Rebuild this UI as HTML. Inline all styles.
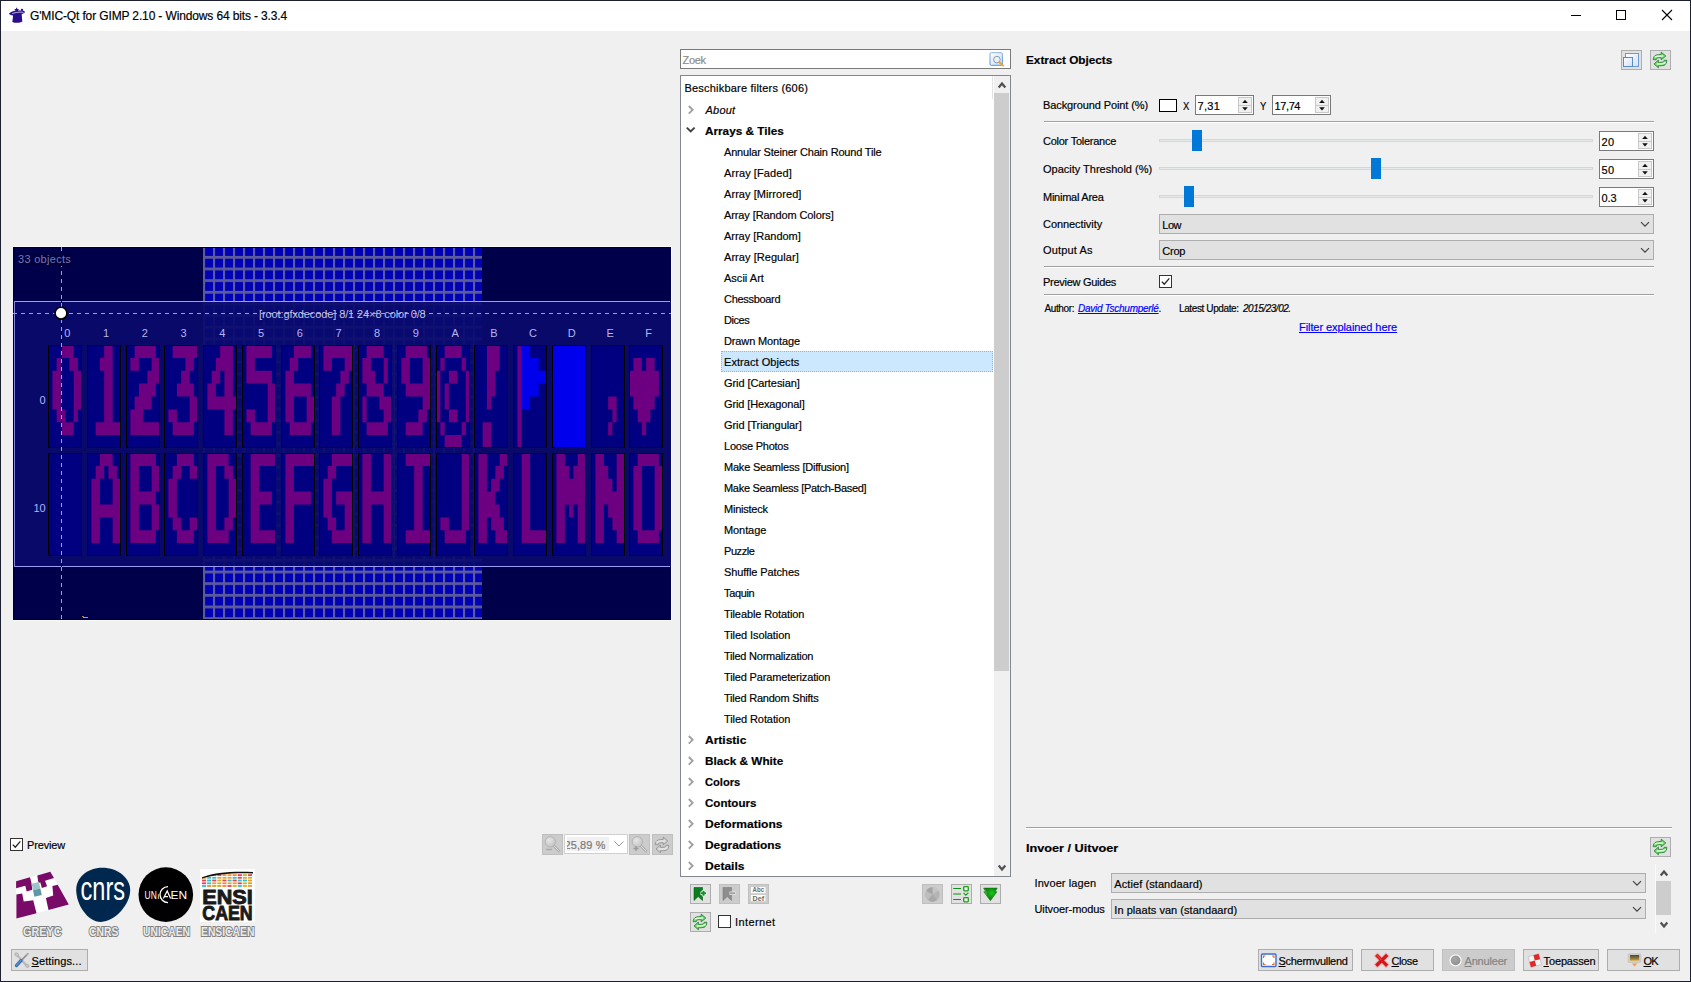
<!DOCTYPE html>
<html><head><meta charset="utf-8"><title>G'MIC-Qt</title><style>
html,body{margin:0;padding:0;background:#f0f0f0;}
body{width:1691px;height:982px;overflow:hidden;position:relative;font-family:"Liberation Sans",sans-serif;font-size:11px;}
.a{position:absolute;display:block;}
.t{white-space:nowrap;-webkit-text-stroke:0.18px currentColor;}
u{text-decoration:underline;text-underline-offset:1px;}
</style></head><body>
<div class="a" style="left:0px;top:0px;width:1691px;height:982px;background:#f0f0f0;"></div>
<div class="a" style="left:1px;top:1px;width:1689px;height:30px;background:#fff;"></div>
<div class="a" style="left:0px;top:0px;width:1691px;height:1px;background:#1d2030;"></div>
<div class="a" style="left:0px;top:981px;width:1691px;height:1px;background:#1d2030;"></div>
<div class="a" style="left:0px;top:0px;width:1px;height:982px;background:#1d2030;"></div>
<div class="a" style="left:1690px;top:0px;width:1px;height:982px;background:#1d2030;"></div>
<svg class="a" style="left:8px;top:6px" width="18" height="18" viewBox="0 0 18 18">
<path d="M5.3 8.2 L13.6 7.2 L14.3 15.4 C12.4 17 6.6 17.2 4.3 15.9 Z" fill="#2a0f8c"/>
<ellipse cx="9" cy="6.9" rx="8" ry="2.3" transform="rotate(-7 9 6.9)" fill="#2a0f8c"/>
<path d="M8.6 1.2 L9.4 2.9 L11.2 3.0 L9.9 4.3 L10.3 6.1 L8.6 5.2 L7.0 6.1 L7.4 4.3 L6.1 3.0 L7.9 2.9 Z" fill="#2a0f8c"/>
<circle cx="14" cy="3.9" r="1.15" fill="#2a0f8c"/>
<path d="M4.2 7.6 C6.5 6.6 10.5 6.0 14.5 6.1" stroke="#fff" stroke-width="0.8" fill="none" opacity="0.85"/>
<path d="M13.8 6.6 C15 6.6 16.3 6.9 16.8 7.4" stroke="#fff" stroke-width="0.6" fill="none" opacity="0.8"/>
</svg>
<span id="t1" class="a t" style="left:30.00px;top:9.00px;font-size:12px;line-height:14px;color:#000;letter-spacing:-0.133px;">G'MIC-Qt for GIMP 2.10 - Windows 64 bits - 3.3.4</span>
<svg class="a" style="left:1560px;top:1px" width="130" height="30" viewBox="1560 1 130 30" shape-rendering="crispEdges">
<rect x="1571" y="15" width="10" height="1" fill="#000"/>
<rect x="1616.5" y="10.5" width="9" height="9" fill="none" stroke="#000" stroke-width="1"/>
</svg>
<svg class="a" style="left:1655px;top:5px" width="24" height="22" viewBox="1655 5 24 22">
<path d="M1662 10 L1672 20 M1672 10 L1662 20" stroke="#000" stroke-width="1.1" fill="none"/>
</svg>
<div class="a" style="left:13px;top:246px;width:659px;height:1px;background:#fbfbfb;"></div>
<div class="a" style="left:671px;top:246px;width:1px;height:375px;background:#fbfbfb;"></div>
<div class="a" style="left:13px;top:620px;width:659px;height:1px;background:#f8f8f8;"></div>
<svg style="position:absolute;left:13px;top:247px" width="658" height="373" viewBox="13 247 658 373">
<defs>
<pattern id="gr" x="203" y="255.9" width="10" height="11.655" patternUnits="userSpaceOnUse"><rect width="10" height="11.655" fill="#0000b4"/><rect x="0" y="0" width="2.1" height="11.655" fill="#5a5a9c"/><rect x="0" y="0" width="10" height="2.8" fill="#5a5a9c"/></pattern>
</defs>
<rect x="13" y="247" width="658" height="373" fill="#00004a"/>
<rect x="203" y="247" width="279" height="373" fill="url(#gr)" shape-rendering="crispEdges"/>
<g shape-rendering="crispEdges"><rect x="14" y="301" width="658" height="266" fill="#0a0a6d" fill-opacity="0.92"/>
<rect x="14" y="301" width="656" height="1" fill="#9c9cf4"/>
<rect x="14" y="566" width="656" height="1" fill="#9c9cf4"/>
<rect x="14" y="301" width="1" height="266" fill="#8484e0"/>
<rect x="13" y="247" width="658" height="1" fill="#000014"/>
<rect x="13" y="247" width="1" height="373" fill="#000014"/>
<rect x="13" y="619" width="658" height="1" fill="#000014"/></g>
<rect x="48" y="345" width="34" height="103" fill="#000080" shape-rendering="crispEdges"/>
<path d="M60.90 345.00H73.65V357.88H60.90ZM56.65 357.88H60.90V370.75H56.65ZM69.40 357.88H77.90V370.75H69.40ZM52.40 370.75H60.90V383.62H52.40ZM73.65 370.75H82.00V383.62H73.65ZM52.40 383.62H60.90V396.50H52.40ZM73.65 383.62H82.00V396.50H73.65ZM52.40 396.50H60.90V409.38H52.40ZM73.65 396.50H82.00V409.38H73.65ZM56.65 409.38H65.15V422.25H56.65ZM73.65 409.38H77.90V422.25H73.65ZM60.90 422.25H73.65V435.12H60.90Z" fill="#6c0080"/>
<rect x="87" y="345" width="34" height="103" fill="#000080" shape-rendering="crispEdges"/>
<path d="M104.15 345.00H112.65V357.88H104.15ZM99.90 357.88H112.65V370.75H99.90ZM104.15 370.75H112.65V383.62H104.15ZM104.15 383.62H112.65V396.50H104.15ZM104.15 396.50H112.65V409.38H104.15ZM104.15 409.38H112.65V422.25H104.15ZM95.65 422.25H121.00V435.12H95.65Z" fill="#6c0080"/>
<rect x="126" y="345" width="34" height="103" fill="#000080" shape-rendering="crispEdges"/>
<path d="M134.65 345.00H155.90V357.88H134.65ZM130.40 357.88H138.90V370.75H130.40ZM151.65 357.88H160.00V370.75H151.65ZM147.40 370.75H160.00V383.62H147.40ZM138.90 383.62H155.90V396.50H138.90ZM134.65 396.50H151.65V409.38H134.65ZM130.40 409.38H143.15V422.25H130.40ZM130.40 422.25H160.00V435.12H130.40Z" fill="#6c0080"/>
<rect x="164" y="345" width="34" height="103" fill="#000080" shape-rendering="crispEdges"/>
<path d="M172.65 345.00H198.00V357.88H172.65ZM185.40 357.88H193.90V370.75H185.40ZM181.15 370.75H189.65V383.62H181.15ZM176.90 383.62H193.90V396.50H176.90ZM189.65 396.50H198.00V409.38H189.65ZM168.40 409.38H176.90V422.25H168.40ZM189.65 409.38H198.00V422.25H189.65ZM172.65 422.25H193.90V435.12H172.65Z" fill="#6c0080"/>
<rect x="203" y="345" width="34" height="103" fill="#000080" shape-rendering="crispEdges"/>
<path d="M220.15 345.00H232.90V357.88H220.15ZM215.90 357.88H232.90V370.75H215.90ZM211.65 370.75H220.15V383.62H211.65ZM224.40 370.75H232.90V383.62H224.40ZM207.40 383.62H215.90V396.50H207.40ZM224.40 383.62H232.90V396.50H224.40ZM207.40 396.50H237.00V409.38H207.40ZM224.40 409.38H232.90V422.25H224.40ZM224.40 422.25H232.90V435.12H224.40Z" fill="#6c0080"/>
<rect x="242" y="345" width="34" height="103" fill="#000080" shape-rendering="crispEdges"/>
<path d="M246.40 345.00H271.90V357.88H246.40ZM246.40 357.88H254.90V370.75H246.40ZM246.40 370.75H271.90V383.62H246.40ZM267.65 383.62H276.00V396.50H267.65ZM267.65 396.50H276.00V409.38H267.65ZM246.40 409.38H254.90V422.25H246.40ZM267.65 409.38H276.00V422.25H267.65ZM250.65 422.25H271.90V435.12H250.65Z" fill="#6c0080"/>
<rect x="281" y="345" width="34" height="103" fill="#000080" shape-rendering="crispEdges"/>
<path d="M293.90 345.00H310.90V357.88H293.90ZM289.65 357.88H298.15V370.75H289.65ZM285.40 370.75H293.90V383.62H285.40ZM285.40 383.62H310.90V396.50H285.40ZM285.40 396.50H293.90V409.38H285.40ZM306.65 396.50H315.00V409.38H306.65ZM285.40 409.38H293.90V422.25H285.40ZM306.65 409.38H315.00V422.25H306.65ZM289.65 422.25H310.90V435.12H289.65Z" fill="#6c0080"/>
<rect x="319" y="345" width="34" height="103" fill="#000080" shape-rendering="crispEdges"/>
<path d="M323.40 345.00H353.00V357.88H323.40ZM323.40 357.88H331.90V370.75H323.40ZM344.65 357.88H353.00V370.75H344.65ZM340.40 370.75H348.90V383.62H340.40ZM336.15 383.62H344.65V396.50H336.15ZM331.90 396.50H340.40V409.38H331.90ZM331.90 409.38H340.40V422.25H331.90ZM331.90 422.25H340.40V435.12H331.90Z" fill="#6c0080"/>
<rect x="358" y="345" width="34" height="103" fill="#000080" shape-rendering="crispEdges"/>
<path d="M366.65 345.00H383.65V357.88H366.65ZM362.40 357.88H370.90V370.75H362.40ZM383.65 357.88H387.90V370.75H383.65ZM362.40 370.75H375.15V383.62H362.40ZM383.65 370.75H387.90V383.62H383.65ZM366.65 383.62H383.65V396.50H366.65ZM362.40 396.50H366.65V409.38H362.40ZM379.40 396.50H392.00V409.38H379.40ZM362.40 409.38H366.65V422.25H362.40ZM383.65 409.38H392.00V422.25H383.65ZM366.65 422.25H387.90V435.12H366.65Z" fill="#6c0080"/>
<rect x="397" y="345" width="34" height="103" fill="#000080" shape-rendering="crispEdges"/>
<path d="M405.65 345.00H426.90V357.88H405.65ZM401.40 357.88H409.90V370.75H401.40ZM422.65 357.88H431.00V370.75H422.65ZM401.40 370.75H409.90V383.62H401.40ZM422.65 370.75H431.00V383.62H422.65ZM405.65 383.62H431.00V396.50H405.65ZM422.65 396.50H431.00V409.38H422.65ZM418.40 409.38H426.90V422.25H418.40ZM405.65 422.25H422.65V435.12H405.65Z" fill="#6c0080"/>
<rect x="436" y="345" width="34" height="103" fill="#000080" shape-rendering="crispEdges"/>
<path d="M444.65 345.00H461.65V357.88H444.65ZM440.40 357.88H444.65V370.75H440.40ZM461.65 357.88H465.90V370.75H461.65ZM436.15 370.75H440.40V383.62H436.15ZM448.90 370.75H457.40V383.62H448.90ZM465.90 370.75H470.00V383.62H465.90ZM436.15 383.62H440.40V396.50H436.15ZM444.65 383.62H448.90V396.50H444.65ZM465.90 383.62H470.00V396.50H465.90ZM436.15 396.50H440.40V409.38H436.15ZM444.65 396.50H448.90V409.38H444.65ZM465.90 396.50H470.00V409.38H465.90ZM436.15 409.38H440.40V422.25H436.15ZM448.90 409.38H457.40V422.25H448.90ZM465.90 409.38H470.00V422.25H465.90ZM440.40 422.25H444.65V435.12H440.40ZM461.65 422.25H465.90V435.12H461.65ZM444.65 435.12H461.65V448.00H444.65Z" fill="#6c0080"/>
<rect x="474" y="345" width="34" height="103" fill="#000080" shape-rendering="crispEdges"/>
<path d="M486.90 345.00H499.65V357.88H486.90ZM486.90 357.88H499.65V370.75H486.90ZM486.90 370.75H495.40V383.62H486.90ZM486.90 383.62H495.40V396.50H486.90ZM486.90 396.50H491.15V409.38H486.90ZM482.65 422.25H491.15V435.12H482.65ZM482.65 435.12H491.15V448.00H482.65Z" fill="#6c0080"/>
<rect x="513" y="345" width="34" height="103" fill="#000080" shape-rendering="crispEdges"/>
<path d="M517.40 345.00H521.65V357.88H517.40ZM517.40 357.88H521.65V370.75H517.40ZM517.40 370.75H521.65V383.62H517.40ZM517.40 383.62H521.65V396.50H517.40ZM517.40 396.50H521.65V409.38H517.40ZM517.40 409.38H521.65V422.25H517.40ZM517.40 422.25H521.65V435.12H517.40ZM517.40 435.12H521.65V448.00H517.40Z" fill="#6c0080"/>
<path d="M521.65 345.00H530.15V357.88H521.65ZM521.65 357.88H538.65V370.75H521.65ZM521.65 370.75H547.00V383.62H521.65ZM521.65 383.62H538.65V396.50H521.65ZM521.65 396.50H530.15V409.38H521.65Z" fill="#0000ec"/>
<rect x="552" y="345" width="34" height="103" fill="#000080" shape-rendering="crispEdges"/>
<path d="M552.15 345.00H586.00V357.88H552.15ZM552.15 357.88H586.00V370.75H552.15ZM552.15 370.75H586.00V383.62H552.15ZM552.15 383.62H586.00V396.50H552.15ZM552.15 396.50H586.00V409.38H552.15ZM552.15 409.38H586.00V422.25H552.15ZM552.15 422.25H586.00V435.12H552.15ZM552.15 435.12H586.00V448.00H552.15Z" fill="#0000ec"/>
<rect x="591" y="345" width="34" height="103" fill="#000080" shape-rendering="crispEdges"/>
<path d="M608.15 396.50H616.65V409.38H608.15ZM612.40 409.38H616.65V422.25H612.40ZM608.15 422.25H612.40V435.12H608.15Z" fill="#6c0080"/>
<rect x="629" y="345" width="34" height="103" fill="#000080" shape-rendering="crispEdges"/>
<path d="M633.40 357.88H641.90V370.75H633.40ZM646.15 357.88H654.65V370.75H646.15ZM629.15 370.75H658.90V383.62H629.15ZM629.15 383.62H658.90V396.50H629.15ZM633.40 396.50H654.65V409.38H633.40ZM637.65 409.38H650.40V422.25H637.65ZM641.90 422.25H646.15V435.12H641.90Z" fill="#6c0080"/>
<rect x="48" y="453" width="34" height="103" fill="#000080" shape-rendering="crispEdges"/>
<rect x="87" y="453" width="34" height="103" fill="#000080" shape-rendering="crispEdges"/>
<path d="M99.90 453.00H112.65V465.88H99.90ZM95.65 465.88H104.15V478.75H95.65ZM108.40 465.88H116.90V478.75H108.40ZM91.40 478.75H99.90V491.62H91.40ZM112.65 478.75H121.00V491.62H112.65ZM91.40 491.62H99.90V504.50H91.40ZM112.65 491.62H121.00V504.50H112.65ZM91.40 504.50H121.00V517.38H91.40ZM91.40 517.38H99.90V530.25H91.40ZM112.65 517.38H121.00V530.25H112.65ZM91.40 530.25H99.90V543.12H91.40ZM112.65 530.25H121.00V543.12H112.65Z" fill="#6c0080"/>
<rect x="126" y="453" width="34" height="103" fill="#000080" shape-rendering="crispEdges"/>
<path d="M130.40 453.00H155.90V465.88H130.40ZM130.40 465.88H138.90V478.75H130.40ZM151.65 465.88H160.00V478.75H151.65ZM130.40 478.75H138.90V491.62H130.40ZM151.65 478.75H160.00V491.62H151.65ZM130.40 491.62H155.90V504.50H130.40ZM130.40 504.50H138.90V517.38H130.40ZM151.65 504.50H160.00V517.38H151.65ZM130.40 517.38H138.90V530.25H130.40ZM151.65 517.38H160.00V530.25H151.65ZM130.40 530.25H155.90V543.12H130.40Z" fill="#6c0080"/>
<rect x="164" y="453" width="34" height="103" fill="#000080" shape-rendering="crispEdges"/>
<path d="M176.90 453.00H193.90V465.88H176.90ZM172.65 465.88H181.15V478.75H172.65ZM189.65 465.88H198.00V478.75H189.65ZM168.40 478.75H176.90V491.62H168.40ZM168.40 491.62H176.90V504.50H168.40ZM168.40 504.50H176.90V517.38H168.40ZM172.65 517.38H181.15V530.25H172.65ZM189.65 517.38H198.00V530.25H189.65ZM176.90 530.25H193.90V543.12H176.90Z" fill="#6c0080"/>
<rect x="203" y="453" width="34" height="103" fill="#000080" shape-rendering="crispEdges"/>
<path d="M207.40 453.00H228.65V465.88H207.40ZM207.40 465.88H215.90V478.75H207.40ZM224.40 465.88H232.90V478.75H224.40ZM207.40 478.75H215.90V491.62H207.40ZM228.65 478.75H237.00V491.62H228.65ZM207.40 491.62H215.90V504.50H207.40ZM228.65 491.62H237.00V504.50H228.65ZM207.40 504.50H215.90V517.38H207.40ZM228.65 504.50H237.00V517.38H228.65ZM207.40 517.38H215.90V530.25H207.40ZM224.40 517.38H232.90V530.25H224.40ZM207.40 530.25H228.65V543.12H207.40Z" fill="#6c0080"/>
<rect x="242" y="453" width="34" height="103" fill="#000080" shape-rendering="crispEdges"/>
<path d="M250.65 453.00H276.00V465.88H250.65ZM250.65 465.88H259.15V478.75H250.65ZM250.65 478.75H259.15V491.62H250.65ZM250.65 491.62H271.90V504.50H250.65ZM250.65 504.50H259.15V517.38H250.65ZM250.65 517.38H259.15V530.25H250.65ZM250.65 530.25H276.00V543.12H250.65Z" fill="#6c0080"/>
<rect x="281" y="453" width="34" height="103" fill="#000080" shape-rendering="crispEdges"/>
<path d="M285.40 453.00H315.00V465.88H285.40ZM285.40 465.88H293.90V478.75H285.40ZM285.40 478.75H293.90V491.62H285.40ZM285.40 491.62H310.90V504.50H285.40ZM285.40 504.50H293.90V517.38H285.40ZM285.40 517.38H293.90V530.25H285.40ZM285.40 530.25H293.90V543.12H285.40Z" fill="#6c0080"/>
<rect x="319" y="453" width="34" height="103" fill="#000080" shape-rendering="crispEdges"/>
<path d="M331.90 453.00H353.00V465.88H331.90ZM327.65 465.88H336.15V478.75H327.65ZM323.40 478.75H331.90V491.62H323.40ZM323.40 491.62H331.90V504.50H323.40ZM336.15 491.62H353.00V504.50H336.15ZM323.40 504.50H331.90V517.38H323.40ZM344.65 504.50H353.00V517.38H344.65ZM327.65 517.38H336.15V530.25H327.65ZM344.65 517.38H353.00V530.25H344.65ZM331.90 530.25H353.00V543.12H331.90Z" fill="#6c0080"/>
<rect x="358" y="453" width="34" height="103" fill="#000080" shape-rendering="crispEdges"/>
<path d="M362.40 453.00H370.90V465.88H362.40ZM383.65 453.00H392.00V465.88H383.65ZM362.40 465.88H370.90V478.75H362.40ZM383.65 465.88H392.00V478.75H383.65ZM362.40 478.75H370.90V491.62H362.40ZM383.65 478.75H392.00V491.62H383.65ZM362.40 491.62H392.00V504.50H362.40ZM362.40 504.50H370.90V517.38H362.40ZM383.65 504.50H392.00V517.38H383.65ZM362.40 517.38H370.90V530.25H362.40ZM383.65 517.38H392.00V530.25H383.65ZM362.40 530.25H370.90V543.12H362.40ZM383.65 530.25H392.00V543.12H383.65Z" fill="#6c0080"/>
<rect x="397" y="453" width="34" height="103" fill="#000080" shape-rendering="crispEdges"/>
<path d="M405.65 453.00H431.00V465.88H405.65ZM414.15 465.88H422.65V478.75H414.15ZM414.15 478.75H422.65V491.62H414.15ZM414.15 491.62H422.65V504.50H414.15ZM414.15 504.50H422.65V517.38H414.15ZM414.15 517.38H422.65V530.25H414.15ZM405.65 530.25H431.00V543.12H405.65Z" fill="#6c0080"/>
<rect x="436" y="453" width="34" height="103" fill="#000080" shape-rendering="crispEdges"/>
<path d="M461.65 453.00H470.00V465.88H461.65ZM461.65 465.88H470.00V478.75H461.65ZM461.65 478.75H470.00V491.62H461.65ZM461.65 491.62H470.00V504.50H461.65ZM461.65 504.50H470.00V517.38H461.65ZM440.40 517.38H448.90V530.25H440.40ZM461.65 517.38H470.00V530.25H461.65ZM444.65 530.25H465.90V543.12H444.65Z" fill="#6c0080"/>
<rect x="474" y="453" width="34" height="103" fill="#000080" shape-rendering="crispEdges"/>
<path d="M478.40 453.00H486.90V465.88H478.40ZM499.65 453.00H508.00V465.88H499.65ZM478.40 465.88H486.90V478.75H478.40ZM495.40 465.88H503.90V478.75H495.40ZM478.40 478.75H486.90V491.62H478.40ZM491.15 478.75H499.65V491.62H491.15ZM478.40 491.62H495.40V504.50H478.40ZM478.40 504.50H499.65V517.38H478.40ZM478.40 517.38H486.90V530.25H478.40ZM491.15 517.38H503.90V530.25H491.15ZM478.40 530.25H486.90V543.12H478.40ZM495.40 530.25H508.00V543.12H495.40Z" fill="#6c0080"/>
<rect x="513" y="453" width="34" height="103" fill="#000080" shape-rendering="crispEdges"/>
<path d="M521.65 453.00H530.15V465.88H521.65ZM521.65 465.88H530.15V478.75H521.65ZM521.65 478.75H530.15V491.62H521.65ZM521.65 491.62H530.15V504.50H521.65ZM521.65 504.50H530.15V517.38H521.65ZM521.65 517.38H530.15V530.25H521.65ZM521.65 530.25H547.00V543.12H521.65Z" fill="#6c0080"/>
<rect x="552" y="453" width="34" height="103" fill="#000080" shape-rendering="crispEdges"/>
<path d="M556.40 453.00H564.90V465.88H556.40ZM577.65 453.00H586.00V465.88H577.65ZM556.40 465.88H569.15V478.75H556.40ZM573.40 465.88H586.00V478.75H573.40ZM556.40 478.75H586.00V491.62H556.40ZM556.40 491.62H586.00V504.50H556.40ZM556.40 504.50H564.90V517.38H556.40ZM569.15 504.50H573.40V517.38H569.15ZM577.65 504.50H586.00V517.38H577.65ZM556.40 517.38H564.90V530.25H556.40ZM577.65 517.38H586.00V530.25H577.65ZM556.40 530.25H564.90V543.12H556.40ZM577.65 530.25H586.00V543.12H577.65Z" fill="#6c0080"/>
<rect x="591" y="453" width="34" height="103" fill="#000080" shape-rendering="crispEdges"/>
<path d="M595.40 453.00H603.90V465.88H595.40ZM616.65 453.00H625.00V465.88H616.65ZM595.40 465.88H608.15V478.75H595.40ZM616.65 465.88H625.00V478.75H616.65ZM595.40 478.75H612.40V491.62H595.40ZM616.65 478.75H625.00V491.62H616.65ZM595.40 491.62H625.00V504.50H595.40ZM595.40 504.50H603.90V517.38H595.40ZM608.15 504.50H625.00V517.38H608.15ZM595.40 517.38H603.90V530.25H595.40ZM612.40 517.38H625.00V530.25H612.40ZM595.40 530.25H603.90V543.12H595.40ZM616.65 530.25H625.00V543.12H616.65Z" fill="#6c0080"/>
<rect x="629" y="453" width="34" height="103" fill="#000080" shape-rendering="crispEdges"/>
<path d="M637.65 453.00H658.90V465.88H637.65ZM633.40 465.88H641.90V478.75H633.40ZM654.65 465.88H663.00V478.75H654.65ZM633.40 478.75H641.90V491.62H633.40ZM654.65 478.75H663.00V491.62H654.65ZM633.40 491.62H641.90V504.50H633.40ZM654.65 491.62H663.00V504.50H654.65ZM633.40 504.50H641.90V517.38H633.40ZM654.65 504.50H663.00V517.38H654.65ZM633.40 517.38H641.90V530.25H633.40ZM654.65 517.38H663.00V530.25H654.65ZM637.65 530.25H658.90V543.12H637.65Z" fill="#6c0080"/>
<path d="M48 345h34v103h-34z M49 346v101h32v-101z" fill="#000" fill-rule="evenodd" shape-rendering="crispEdges"/>
<path d="M87 345h34v103h-34z M88 346v101h32v-101z" fill="#000" fill-rule="evenodd" shape-rendering="crispEdges"/>
<path d="M126 345h34v103h-34z M127 346v101h32v-101z" fill="#000" fill-rule="evenodd" shape-rendering="crispEdges"/>
<path d="M164 345h34v103h-34z M165 346v101h32v-101z" fill="#000" fill-rule="evenodd" shape-rendering="crispEdges"/>
<path d="M203 345h34v103h-34z M204 346v101h32v-101z" fill="#000" fill-rule="evenodd" shape-rendering="crispEdges"/>
<path d="M242 345h34v103h-34z M243 346v101h32v-101z" fill="#000" fill-rule="evenodd" shape-rendering="crispEdges"/>
<path d="M281 345h34v103h-34z M282 346v101h32v-101z" fill="#000" fill-rule="evenodd" shape-rendering="crispEdges"/>
<path d="M319 345h34v103h-34z M320 346v101h32v-101z" fill="#000" fill-rule="evenodd" shape-rendering="crispEdges"/>
<path d="M358 345h34v103h-34z M359 346v101h32v-101z" fill="#000" fill-rule="evenodd" shape-rendering="crispEdges"/>
<path d="M397 345h34v103h-34z M398 346v101h32v-101z" fill="#000" fill-rule="evenodd" shape-rendering="crispEdges"/>
<path d="M436 345h34v103h-34z M437 346v101h32v-101z" fill="#000" fill-rule="evenodd" shape-rendering="crispEdges"/>
<path d="M474 345h34v103h-34z M475 346v101h32v-101z" fill="#000" fill-rule="evenodd" shape-rendering="crispEdges"/>
<path d="M513 345h34v103h-34z M514 346v101h32v-101z" fill="#000" fill-rule="evenodd" shape-rendering="crispEdges"/>
<path d="M552 345h34v103h-34z M553 346v101h32v-101z" fill="#000" fill-rule="evenodd" shape-rendering="crispEdges"/>
<path d="M591 345h34v103h-34z M592 346v101h32v-101z" fill="#000" fill-rule="evenodd" shape-rendering="crispEdges"/>
<path d="M629 345h34v103h-34z M630 346v101h32v-101z" fill="#000" fill-rule="evenodd" shape-rendering="crispEdges"/>
<path d="M48 453h34v103h-34z M49 454v101h32v-101z" fill="#000" fill-rule="evenodd" shape-rendering="crispEdges"/>
<path d="M87 453h34v103h-34z M88 454v101h32v-101z" fill="#000" fill-rule="evenodd" shape-rendering="crispEdges"/>
<path d="M126 453h34v103h-34z M127 454v101h32v-101z" fill="#000" fill-rule="evenodd" shape-rendering="crispEdges"/>
<path d="M164 453h34v103h-34z M165 454v101h32v-101z" fill="#000" fill-rule="evenodd" shape-rendering="crispEdges"/>
<path d="M203 453h34v103h-34z M204 454v101h32v-101z" fill="#000" fill-rule="evenodd" shape-rendering="crispEdges"/>
<path d="M242 453h34v103h-34z M243 454v101h32v-101z" fill="#000" fill-rule="evenodd" shape-rendering="crispEdges"/>
<path d="M281 453h34v103h-34z M282 454v101h32v-101z" fill="#000" fill-rule="evenodd" shape-rendering="crispEdges"/>
<path d="M319 453h34v103h-34z M320 454v101h32v-101z" fill="#000" fill-rule="evenodd" shape-rendering="crispEdges"/>
<path d="M358 453h34v103h-34z M359 454v101h32v-101z" fill="#000" fill-rule="evenodd" shape-rendering="crispEdges"/>
<path d="M397 453h34v103h-34z M398 454v101h32v-101z" fill="#000" fill-rule="evenodd" shape-rendering="crispEdges"/>
<path d="M436 453h34v103h-34z M437 454v101h32v-101z" fill="#000" fill-rule="evenodd" shape-rendering="crispEdges"/>
<path d="M474 453h34v103h-34z M475 454v101h32v-101z" fill="#000" fill-rule="evenodd" shape-rendering="crispEdges"/>
<path d="M513 453h34v103h-34z M514 454v101h32v-101z" fill="#000" fill-rule="evenodd" shape-rendering="crispEdges"/>
<path d="M552 453h34v103h-34z M553 454v101h32v-101z" fill="#000" fill-rule="evenodd" shape-rendering="crispEdges"/>
<path d="M591 453h34v103h-34z M592 454v101h32v-101z" fill="#000" fill-rule="evenodd" shape-rendering="crispEdges"/>
<path d="M629 453h34v103h-34z M630 454v101h32v-101z" fill="#000" fill-rule="evenodd" shape-rendering="crispEdges"/>
<g shape-rendering="crispEdges">
<rect x="13" y="313" width="658" height="1" fill="#00001c"/>
<rect x="61" y="247" width="1" height="373" fill="#00001c"/>
<line x1="13" y1="313.5" x2="671" y2="313.5" stroke="#a2a2b8" stroke-width="1" stroke-dasharray="4 4"/>
<line x1="61.5" y1="247" x2="61.5" y2="620" stroke="#a2a2b8" stroke-width="1" stroke-dasharray="4 4"/>
</g>
<circle cx="61" cy="313.2" r="5.9" fill="#fff" stroke="#000" stroke-width="1.6"/>
</svg>
<span id="t2" class="a t" style="left:18.00px;top:253.00px;font-size:11px;line-height:13px;color:#7676b2;letter-spacing:0.294px;background:#00003e;-webkit-text-stroke:0;">33 objects</span>
<span id="t3" class="a t" style="left:259.00px;top:308.00px;font-size:11px;line-height:13px;color:#c0c0e8;letter-spacing:-0.106px;-webkit-text-stroke:0;">[root:gfxdecode] 8/1 24×8 color 0/8</span>
<span id="t4" class="a t" style="left:64.20px;top:327.00px;font-size:11px;line-height:13px;color:#b4b4f2;-webkit-text-stroke:0;">0</span>
<span id="t5" class="a t" style="left:102.94px;top:327.00px;font-size:11px;line-height:13px;color:#b4b4f2;-webkit-text-stroke:0;">1</span>
<span id="t6" class="a t" style="left:141.68px;top:327.00px;font-size:11px;line-height:13px;color:#b4b4f2;-webkit-text-stroke:0;">2</span>
<span id="t7" class="a t" style="left:180.42px;top:327.00px;font-size:11px;line-height:13px;color:#b4b4f2;-webkit-text-stroke:0;">3</span>
<span id="t8" class="a t" style="left:219.16px;top:327.00px;font-size:11px;line-height:13px;color:#b4b4f2;-webkit-text-stroke:0;">4</span>
<span id="t9" class="a t" style="left:257.90px;top:327.00px;font-size:11px;line-height:13px;color:#b4b4f2;-webkit-text-stroke:0;">5</span>
<span id="t10" class="a t" style="left:296.64px;top:327.00px;font-size:11px;line-height:13px;color:#b4b4f2;-webkit-text-stroke:0;">6</span>
<span id="t11" class="a t" style="left:335.38px;top:327.00px;font-size:11px;line-height:13px;color:#b4b4f2;-webkit-text-stroke:0;">7</span>
<span id="t12" class="a t" style="left:374.12px;top:327.00px;font-size:11px;line-height:13px;color:#b4b4f2;-webkit-text-stroke:0;">8</span>
<span id="t13" class="a t" style="left:412.86px;top:327.00px;font-size:11px;line-height:13px;color:#b4b4f2;-webkit-text-stroke:0;">9</span>
<span id="t14" class="a t" style="left:451.60px;top:327.00px;font-size:11px;line-height:13px;color:#b4b4f2;-webkit-text-stroke:0;">A</span>
<span id="t15" class="a t" style="left:490.34px;top:327.00px;font-size:11px;line-height:13px;color:#b4b4f2;-webkit-text-stroke:0;">B</span>
<span id="t16" class="a t" style="left:529.08px;top:327.00px;font-size:11px;line-height:13px;color:#b4b4f2;-webkit-text-stroke:0;">C</span>
<span id="t17" class="a t" style="left:567.82px;top:327.00px;font-size:11px;line-height:13px;color:#b4b4f2;-webkit-text-stroke:0;">D</span>
<span id="t18" class="a t" style="left:606.56px;top:327.00px;font-size:11px;line-height:13px;color:#b4b4f2;-webkit-text-stroke:0;">E</span>
<span id="t19" class="a t" style="left:645.30px;top:327.00px;font-size:11px;line-height:13px;color:#b4b4f2;-webkit-text-stroke:0;">F</span>
<span id="t20" class="a t" style="left:39.50px;top:394.00px;font-size:11px;line-height:13px;color:#b4b4f2;-webkit-text-stroke:0;">0</span>
<span id="t21" class="a t" style="left:33.50px;top:502.00px;font-size:11px;line-height:13px;color:#b4b4f2;-webkit-text-stroke:0;">10</span>
<div class="a" style="left:82px;top:616px;width:2px;height:1px;background:#c87050;"></div>
<div class="a" style="left:83px;top:617px;width:5px;height:1px;background:#e08868;"></div>
<div class="a" style="left:10px;top:838px;width:13px;height:13px;background:#fff;border:1px solid #333;box-sizing:border-box;"></div>
<svg class="a" style="left:10px;top:838px" width="13" height="13" viewBox="0 0 13 13"><path d="M2.8 6.6 L5.3 9.2 L10.3 3.4" stroke="#222" stroke-width="1.3" fill="none"/></svg>
<span id="t22" class="a t" style="left:27.00px;top:839.00px;font-size:11px;line-height:13px;color:#000;letter-spacing:-0.146px;">Preview</span>
<div class="a" style="left:542px;top:834px;width:21px;height:21px;background:#cccccc;border:1px solid #bfbfbf;box-sizing:border-box;"></div>
<div class="a" style="left:564px;top:834px;width:64px;height:20px;background:#fff;border:1px solid #d0d0d0;box-sizing:border-box;"></div>
<div class="a" style="left:567px;top:837px;width:42px;height:14px;background:#f0f0f0;"></div>
<span id="t23" class="a t" style="left:564.50px;top:839.00px;font-size:11px;line-height:13px;color:#787878;letter-spacing:0.104px;clip-path:inset(0 0 0 2.5px);">25,89 %</span>
<svg class="a" style="left:612px;top:838px" width="14" height="12" viewBox="0 0 14 12"><path d="M2.5 3.5 L7 8 L11.5 3.5" stroke="#9a9a9a" stroke-width="1" fill="none"/></svg>
<div class="a" style="left:629px;top:834px;width:21px;height:21px;background:#cccccc;border:1px solid #bfbfbf;box-sizing:border-box;"></div>
<div class="a" style="left:652px;top:834px;width:21px;height:21px;background:#cccccc;border:1px solid #bfbfbf;box-sizing:border-box;"></div>
<svg class="a" style="left:542px;top:834px" width="21" height="21" viewBox="0 0 21 21"><defs><radialGradient id="mg542" cx="0.4" cy="0.35" r="0.7"><stop offset="0" stop-color="#e6e6e6"/><stop offset="1" stop-color="#c2c2c2"/></radialGradient></defs><path d="M11.5 11.5 L17 17" stroke="#b0b0b0" stroke-width="2.6" stroke-linecap="round"/><path d="M11.5 11.5 L17 17" stroke="#d8d8d8" stroke-width="1" stroke-linecap="round"/><circle cx="8.3" cy="7.8" r="5.2" fill="url(#mg542)" stroke="#b4b4b4" stroke-width="1"/><path d="M4 15.5 H10" stroke="#aaa" stroke-width="1.4"/></svg>
<svg class="a" style="left:629px;top:834px" width="21" height="21" viewBox="0 0 21 21"><defs><radialGradient id="mg629" cx="0.4" cy="0.35" r="0.7"><stop offset="0" stop-color="#e6e6e6"/><stop offset="1" stop-color="#c2c2c2"/></radialGradient></defs><path d="M11.5 11.5 L17 17" stroke="#b0b0b0" stroke-width="2.6" stroke-linecap="round"/><path d="M11.5 11.5 L17 17" stroke="#d8d8d8" stroke-width="1" stroke-linecap="round"/><circle cx="8.3" cy="7.8" r="5.2" fill="url(#mg629)" stroke="#b4b4b4" stroke-width="1"/><path d="M4.5 14.5 H9.5 M7 12 V17" stroke="#999" stroke-width="1.4"/></svg>
<svg class="a" style="left:652px;top:834.5px" width="21" height="21" viewBox="0 0 21 21">
<path d="M3.2 9.7 C3.2 7.4 4.4 5.6 6.2 5.1 C7.8 4.6 9.6 4.4 11.2 4.4 L11.2 2.1 L15.8 6 L11.2 9.9 L11.2 7.7 C9.6 7.7 8 7.7 6.9 8 C6.4 8.3 6.3 9 6.3 9.7 Z" fill="#d2d2d2" stroke="#8e8e8e" stroke-width="0.85" stroke-linejoin="round"/>
<path d="M5.2 6.9 C6.8 6.2 9.5 6 12.6 6" stroke="#e4e4e4" stroke-width="1.5" fill="none" stroke-linecap="round"/>
<path d="M16.8 10.2 C16.8 12.6 15.8 14.8 13.9 15.4 C12.3 15.8 10.2 15.8 8.4 15.8 L8.4 17.8 L4 13.9 L8.4 10.1 L8.4 12.4 C10 12.4 11.9 12.4 13.1 12.1 C13.9 11.8 14.1 11 14.1 10.3 Z" fill="#d2d2d2" stroke="#8e8e8e" stroke-width="0.85" stroke-linejoin="round"/>
<path d="M7.2 14.0 C9.8 14.1 13 14.2 15.2 12.6" stroke="#e4e4e4" stroke-width="1.5" fill="none" stroke-linecap="round"/>
</svg>
<svg class="a" style="left:14px;top:866px" width="60" height="58" viewBox="14 866 60 58">
<path d="M16.1 881.2 L50.3 871.8 L68.8 904.4 L16.4 918.6 Z" fill="#fff"/>
<path d="M16.1 881.2 L30.0 877.3 L31.4 882.8 L32.3 889.7 L26.7 891.5 L25.3 885.8 L16.1 888.2 Z" fill="#7a0a68"/><path d="M37.3 875.4 L50.3 871.8 L54.0 878.1 L45.0 880.7 L47.1 886.3 L41.9 887.9 L40.3 882.5 L38.4 882.8 Z" fill="#7a0a68"/><path d="M52.4 886.0 L57.7 884.7 L68.8 904.4 L48.5 910.1 L45.9 898.0 L53.2 895.6 Z" fill="#7a0a68"/><path d="M16.4 894.6 L22.2 893.4 L23.7 901.5 L33.2 900.3 L36.5 913.3 L16.4 918.6 Z" fill="#7a0a68"/>
<path d="M31.6 883.8 L38.9 882.0 L40.3 888.5 L33.0 890.3 Z" fill="#9dc3cc"/><path d="M33.0 890.3 L40.3 888.5 L41.8 895.0 L34.4 896.7 Z" fill="#5f98a4"/>
</svg>
<svg class="a" style="left:74px;top:866px" width="58" height="58" viewBox="74 866 58 58">
<path d="M102.1 867.7 C118.4 867.7 130.2 878.3 130.2 890.1 C130.2 904.4 115.1 921.9 100.9 921.9 C87.4 921.9 76.2 904.4 76.2 889.7 C76.2 877.5 87.4 867.7 102.1 867.7 Z" fill="#00284f"/>
<text x="80.6" y="900.2" font-family="Liberation Sans, sans-serif" font-size="33.5" fill="#fff" textLength="44.5" lengthAdjust="spacingAndGlyphs">cnrs</text>
</svg>
<svg class="a" style="left:137px;top:866px" width="58" height="58" viewBox="137 866 58 58">
<circle cx="165.8" cy="894.6" r="27.3" fill="#000"/>
<g font-family="Liberation Sans, sans-serif" font-size="10.6" fill="#fff">
<text x="144.6" y="898.6" textLength="12.2" lengthAdjust="spacingAndGlyphs">UN</text>
<text x="157.6" y="898.6" font-size="8">i</text>
<text x="170.6" y="898.6" textLength="16.6" lengthAdjust="spacingAndGlyphs">EN</text>
</g>
<path d="M168 886.6 A8 8 0 0 0 168 902.6" stroke="#fff" stroke-width="1.3" fill="none"/>
<path d="M163.4 898.6 L167.2 891 L170.6 898.6 M163.8 896.6 H168" stroke="#fff" stroke-width="1.2" fill="none"/>
</svg>
<svg class="a" style="left:200px;top:868px" width="56" height="55" viewBox="200 868 56 55"><rect x="200" y="869.2" width="54.8" height="52.8" fill="#fff"/><rect x="202.0" y="874.2" width="4.1" height="1.8" fill="#f08838"/><rect x="207.1" y="874.2" width="4.1" height="1.8" fill="#36c0c4"/><rect x="212.2" y="874.2" width="4.1" height="1.8" fill="#36c0c4"/><rect x="217.3" y="874.2" width="4.1" height="1.8" fill="#e0485a"/><rect x="222.4" y="874.2" width="4.1" height="1.8" fill="#f09a38"/><rect x="227.5" y="874.2" width="4.1" height="1.8" fill="#f09a38"/><rect x="232.6" y="874.2" width="4.1" height="1.8" fill="#f08838"/><rect x="237.7" y="874.2" width="4.1" height="1.8" fill="#e0485a"/><rect x="242.8" y="874.2" width="4.1" height="1.8" fill="#d0b428"/><rect x="247.9" y="874.2" width="4.1" height="1.8" fill="#e0485a"/><rect x="202.0" y="876.9" width="4.1" height="1.8" fill="#f09a38"/><rect x="207.1" y="876.9" width="4.1" height="1.8" fill="#36c0c4"/><rect x="212.2" y="876.9" width="4.1" height="1.8" fill="#36c0c4"/><rect x="217.3" y="876.9" width="4.1" height="1.8" fill="#f09a38"/><rect x="222.4" y="876.9" width="4.1" height="1.8" fill="#d0b428"/><rect x="227.5" y="876.9" width="4.1" height="1.8" fill="#f09a38"/><rect x="232.6" y="876.9" width="4.1" height="1.8" fill="#36c0c4"/><rect x="237.7" y="876.9" width="4.1" height="1.8" fill="#e0485a"/><rect x="242.8" y="876.9" width="4.1" height="1.8" fill="#f09a38"/><rect x="247.9" y="876.9" width="4.1" height="1.8" fill="#d0b428"/><rect x="202.0" y="879.6" width="4.1" height="1.8" fill="#e0485a"/><rect x="207.1" y="879.6" width="4.1" height="1.8" fill="#36c0c4"/><rect x="212.2" y="879.6" width="4.1" height="1.8" fill="#e0485a"/><rect x="217.3" y="879.6" width="4.1" height="1.8" fill="#d0b428"/><rect x="222.4" y="879.6" width="4.1" height="1.8" fill="#e0485a"/><rect x="227.5" y="879.6" width="4.1" height="1.8" fill="#36c0c4"/><rect x="232.6" y="879.6" width="4.1" height="1.8" fill="#e0485a"/><rect x="237.7" y="879.6" width="4.1" height="1.8" fill="#36c0c4"/><rect x="242.8" y="879.6" width="4.1" height="1.8" fill="#36c0c4"/><rect x="247.9" y="879.6" width="4.1" height="1.8" fill="#f09a38"/><rect x="202.0" y="882.4" width="4.1" height="1.8" fill="#e0485a"/><rect x="207.1" y="882.4" width="4.1" height="1.8" fill="#36c0c4"/><rect x="212.2" y="882.4" width="4.1" height="1.8" fill="#f09a38"/><rect x="217.3" y="882.4" width="4.1" height="1.8" fill="#d0b428"/><rect x="222.4" y="882.4" width="4.1" height="1.8" fill="#f08838"/><rect x="227.5" y="882.4" width="4.1" height="1.8" fill="#f09a38"/><rect x="232.6" y="882.4" width="4.1" height="1.8" fill="#f09a38"/><rect x="237.7" y="882.4" width="4.1" height="1.8" fill="#e0485a"/><rect x="242.8" y="882.4" width="4.1" height="1.8" fill="#d0b428"/><rect x="247.9" y="882.4" width="4.1" height="1.8" fill="#c8a828"/><rect x="202.0" y="885.1" width="4.1" height="1.8" fill="#36c0c4"/><rect x="207.1" y="885.1" width="4.1" height="1.8" fill="#f08838"/><rect x="212.2" y="885.1" width="4.1" height="1.8" fill="#c8a828"/><rect x="217.3" y="885.1" width="4.1" height="1.8" fill="#c8a828"/><rect x="222.4" y="885.1" width="4.1" height="1.8" fill="#f08838"/><rect x="227.5" y="885.1" width="4.1" height="1.8" fill="#e0485a"/><rect x="232.6" y="885.1" width="4.1" height="1.8" fill="#d0b428"/><rect x="237.7" y="885.1" width="4.1" height="1.8" fill="#36c0c4"/><rect x="242.8" y="885.1" width="4.1" height="1.8" fill="#d0b428"/><rect x="247.9" y="885.1" width="4.1" height="1.8" fill="#f09a38"/><path d="M200.5 869.5 H254.5 V873 C240 870.5 218 872 202 877.8 L200.5 880 Z" fill="#fff"/><path d="M202 877.2 C214 872.6 232 871 253 872 L253 873.6 C236 872.6 216 874 202 878.6 Z" fill="#111"/><g font-family="Liberation Sans, sans-serif" font-weight="bold" font-size="19.4" fill="#1a1a1a" stroke="#1a1a1a" stroke-width="0.9"><text x="202.3" y="903.8" textLength="50.4" lengthAdjust="spacingAndGlyphs">ENSI</text><text x="202.3" y="919.8" textLength="50.4" lengthAdjust="spacingAndGlyphs">CAEN</text></g></svg>
<svg class="a" style="left:21.3px;top:923.6px" width="42.7" height="16" viewBox="21.3 923.6 42.7 16"><text x="23.3" y="935.6" font-family="Liberation Sans, sans-serif" font-weight="bold" font-size="12.4" fill="#ececec" stroke="#808080" stroke-width="2" paint-order="stroke" textLength="38.7" lengthAdjust="spacingAndGlyphs">GREYC</text></svg>
<svg class="a" style="left:86.5px;top:923.6px" width="33.5" height="16" viewBox="86.5 923.6 33.5 16"><text x="88.5" y="935.6" font-family="Liberation Sans, sans-serif" font-weight="bold" font-size="12.4" fill="#ececec" stroke="#808080" stroke-width="2" paint-order="stroke" textLength="29.5" lengthAdjust="spacingAndGlyphs">CNRS</text></svg>
<svg class="a" style="left:140.6px;top:923.6px" width="51.0" height="16" viewBox="140.6 923.6 51.0 16"><text x="142.6" y="935.6" font-family="Liberation Sans, sans-serif" font-weight="bold" font-size="12.4" fill="#ececec" stroke="#808080" stroke-width="2" paint-order="stroke" textLength="47.0" lengthAdjust="spacingAndGlyphs">UNICAEN</text></svg>
<svg class="a" style="left:198.6px;top:923.6px" width="57.400000000000006" height="16" viewBox="198.6 923.6 57.400000000000006 16"><text x="200.6" y="935.6" font-family="Liberation Sans, sans-serif" font-weight="bold" font-size="12.4" fill="#ececec" stroke="#808080" stroke-width="2" paint-order="stroke" textLength="53.400000000000006" lengthAdjust="spacingAndGlyphs">ENSICAEN</text></svg>
<div class="a" style="left:11px;top:949px;width:77px;height:22px;background:#e1e1e1;border:1px solid #adadad;box-sizing:border-box;"></div>
<svg class="a" style="left:13px;top:951px" width="18" height="18" viewBox="0 0 18 18">
<path d="M3 3 L14.5 15.5" stroke="#b8b8b8" stroke-width="2.2" stroke-linecap="round"/>
<path d="M2.2 2 C1.2 3.6 2.2 5.6 4.4 5.4 L5.6 4.2 C5.8 2.4 4 1.2 2.2 2 Z" fill="#c8c8c8" stroke="#999" stroke-width="0.5"/>
<path d="M15.6 16.2 C16.6 14.6 15.6 12.8 13.6 13 L12.6 14 C12.4 15.8 14 16.9 15.6 16.2 Z" fill="#c8c8c8" stroke="#999" stroke-width="0.5"/>
<path d="M14.9 2.6 L8.8 9" stroke="#8e8e8e" stroke-width="1.7" stroke-linecap="round"/><path d="M14.9 2.6 L13.6 4" stroke="#d8d8d8" stroke-width="0.8" stroke-linecap="round"/>
<path d="M8 9.6 L3.4 14.6" stroke="#2f69b4" stroke-width="3.1" stroke-linecap="round"/>
<path d="M8 9.4 L3.4 14.4" stroke="#5b93d8" stroke-width="1.3" stroke-linecap="round"/>
</svg>
<span id="t24" class="a t" style="left:31.50px;top:955.00px;font-size:11px;line-height:13px;color:#000;letter-spacing:0.107px;"><u>S</u>ettings...</span>
<div class="a" style="left:680px;top:49px;width:331px;height:20px;background:#fff;border:1px solid #7a7a7a;box-sizing:border-box;"></div>
<span id="t25" class="a t" style="left:682.50px;top:54.00px;font-size:11px;line-height:13px;color:#8c8c8c;letter-spacing:-0.342px;">Zoek</span>
<svg class="a" style="left:988px;top:51px" width="18" height="17" viewBox="0 0 18 17">
<defs><linearGradient id="sbg" x1="0" y1="0" x2="1" y2="1"><stop offset="0" stop-color="#ffffff"/><stop offset="1" stop-color="#c4defa"/></linearGradient>
<linearGradient id="sbs" x1="0" y1="0" x2="0" y2="1"><stop offset="0" stop-color="#8fb2dc"/><stop offset="1" stop-color="#4f92dc"/></linearGradient></defs>
<rect x="2" y="1.7" width="12.4" height="12.6" rx="1.3" fill="url(#sbg)" stroke="url(#sbs)" stroke-width="1"/>
<circle cx="8.9" cy="8.6" r="3.3" fill="#eef0f6" stroke="#7c8ea4" stroke-width="0.9"/>
<path d="M11.4 11.2 L15.1 14.6" stroke="#f0a232" stroke-width="1.9" stroke-linecap="round"/>
</svg>
<div class="a" style="left:680px;top:75px;width:331px;height:802px;background:#fff;border:1px solid #828790;box-sizing:border-box;"></div>
<div class="a" style="left:994px;top:76px;width:16px;height:800px;background:#f0f0f0;"></div>
<div class="a" style="left:992px;top:76px;width:1px;height:23px;background:#e4e4e4;"></div>
<div class="a" style="left:994px;top:93px;width:15px;height:578px;background:#cdcdcd;"></div>
<svg class="a" style="left:995.5px;top:78.5px" width="12" height="12" viewBox="995.5 78.5 12 12"><path d="M998.2 87.0 L1001.5 83.0 L1004.8 87.0" stroke="#505050" stroke-width="2.2" fill="none"/></svg>
<svg class="a" style="left:995.5px;top:861.5px" width="12" height="12" viewBox="995.5 861.5 12 12"><path d="M998.2 865.0 L1001.5 869.0 L1004.8 865.0" stroke="#505050" stroke-width="2.2" fill="none"/></svg>
<span id="t26" class="a t" style="left:684.50px;top:82.00px;font-size:11px;line-height:13px;color:#000;letter-spacing:0.200px;">Beschikbare filters (606)</span>
<svg class="a" style="left:685px;top:103px" width="12" height="14" viewBox="0 0 12 14"><path d="M3.8 3 L7.6 6.8 L3.8 10.6" stroke="#a0a0a0" stroke-width="1.9" fill="none"/></svg>
<span id="t27" class="a t" style="left:705.60px;top:104.00px;font-size:11px;line-height:13px;color:#000;font-style:italic;letter-spacing:0.190px;">About</span>
<svg class="a" style="left:684px;top:125px" width="14" height="12" viewBox="0 0 14 12"><path d="M2.8 2.6 L6.7 6.5 L10.6 2.6" stroke="#404040" stroke-width="1.9" fill="none"/></svg>
<span id="t28" class="a t" style="left:704.50px;top:125.00px;font-size:11px;line-height:13px;color:#000;font-weight:bold;transform:scaleX(1.0678);transform-origin:0 0;">Arrays &amp; Tiles</span>
<span id="t29" class="a t" style="left:724.00px;top:146.00px;font-size:11px;line-height:13px;color:#000;letter-spacing:-0.183px;">Annular Steiner Chain Round Tile</span>
<span id="t30" class="a t" style="left:724.00px;top:167.00px;font-size:11px;line-height:13px;color:#000;letter-spacing:0.089px;">Array [Faded]</span>
<span id="t31" class="a t" style="left:724.00px;top:188.00px;font-size:11px;line-height:13px;color:#000;letter-spacing:0.068px;">Array [Mirrored]</span>
<span id="t32" class="a t" style="left:724.00px;top:209.00px;font-size:11px;line-height:13px;color:#000;letter-spacing:-0.108px;">Array [Random Colors]</span>
<span id="t33" class="a t" style="left:724.00px;top:230.00px;font-size:11px;line-height:13px;color:#000;letter-spacing:-0.017px;">Array [Random]</span>
<span id="t34" class="a t" style="left:724.00px;top:251.00px;font-size:11px;line-height:13px;color:#000;letter-spacing:0.054px;">Array [Regular]</span>
<span id="t35" class="a t" style="left:724.00px;top:272.00px;font-size:11px;line-height:13px;color:#000;letter-spacing:0.018px;">Ascii Art</span>
<span id="t36" class="a t" style="left:724.00px;top:293.00px;font-size:11px;line-height:13px;color:#000;letter-spacing:-0.303px;">Chessboard</span>
<span id="t37" class="a t" style="left:724.00px;top:314.00px;font-size:11px;line-height:13px;color:#000;letter-spacing:-0.443px;">Dices</span>
<span id="t38" class="a t" style="left:724.00px;top:335.00px;font-size:11px;line-height:13px;color:#000;letter-spacing:-0.127px;">Drawn Montage</span>
<div class="a" style="left:721px;top:351px;width:272px;height:21px;background:#cce8ff;outline:1px dotted #e8a060;outline-offset:-1px;"></div>
<span id="t39" class="a t" style="left:724.00px;top:356.00px;font-size:11px;line-height:13px;color:#000;letter-spacing:0.048px;">Extract Objects</span>
<span id="t40" class="a t" style="left:724.00px;top:377.00px;font-size:11px;line-height:13px;color:#000;letter-spacing:-0.083px;">Grid [Cartesian]</span>
<span id="t41" class="a t" style="left:724.00px;top:398.00px;font-size:11px;line-height:13px;color:#000;letter-spacing:-0.122px;">Grid [Hexagonal]</span>
<span id="t42" class="a t" style="left:724.00px;top:419.00px;font-size:11px;line-height:13px;color:#000;letter-spacing:-0.086px;">Grid [Triangular]</span>
<span id="t43" class="a t" style="left:724.00px;top:440.00px;font-size:11px;line-height:13px;color:#000;letter-spacing:-0.232px;">Loose Photos</span>
<span id="t44" class="a t" style="left:724.00px;top:461.00px;font-size:11px;line-height:13px;color:#000;letter-spacing:-0.209px;">Make Seamless [Diffusion]</span>
<span id="t45" class="a t" style="left:724.00px;top:482.00px;font-size:11px;line-height:13px;color:#000;letter-spacing:-0.297px;">Make Seamless [Patch-Based]</span>
<span id="t46" class="a t" style="left:724.00px;top:503.00px;font-size:11px;line-height:13px;color:#000;letter-spacing:-0.238px;">Ministeck</span>
<span id="t47" class="a t" style="left:724.00px;top:524.00px;font-size:11px;line-height:13px;color:#000;letter-spacing:-0.087px;">Montage</span>
<span id="t48" class="a t" style="left:724.00px;top:545.00px;font-size:11px;line-height:13px;color:#000;letter-spacing:-0.439px;">Puzzle</span>
<span id="t49" class="a t" style="left:724.00px;top:566.00px;font-size:11px;line-height:13px;color:#000;letter-spacing:-0.104px;">Shuffle Patches</span>
<span id="t50" class="a t" style="left:724.00px;top:587.00px;font-size:11px;line-height:13px;color:#000;letter-spacing:-0.337px;">Taquin</span>
<span id="t51" class="a t" style="left:724.00px;top:608.00px;font-size:11px;line-height:13px;color:#000;letter-spacing:-0.108px;">Tileable Rotation</span>
<span id="t52" class="a t" style="left:724.00px;top:629.00px;font-size:11px;line-height:13px;color:#000;letter-spacing:-0.078px;">Tiled Isolation</span>
<span id="t53" class="a t" style="left:724.00px;top:650.00px;font-size:11px;line-height:13px;color:#000;letter-spacing:-0.239px;">Tiled Normalization</span>
<span id="t54" class="a t" style="left:724.00px;top:671.00px;font-size:11px;line-height:13px;color:#000;letter-spacing:-0.152px;">Tiled Parameterization</span>
<span id="t55" class="a t" style="left:724.00px;top:692.00px;font-size:11px;line-height:13px;color:#000;letter-spacing:-0.218px;">Tiled Random Shifts</span>
<span id="t56" class="a t" style="left:724.00px;top:713.00px;font-size:11px;line-height:13px;color:#000;letter-spacing:-0.083px;">Tiled Rotation</span>
<svg class="a" style="left:685px;top:733px" width="12" height="14" viewBox="0 0 12 14"><path d="M3.8 3 L7.6 6.8 L3.8 10.6" stroke="#a0a0a0" stroke-width="1.9" fill="none"/></svg>
<span id="t57" class="a t" style="left:704.50px;top:734.00px;font-size:11px;line-height:13px;color:#000;font-weight:bold;transform:scaleX(1.0922);transform-origin:0 0;">Artistic</span>
<svg class="a" style="left:685px;top:754px" width="12" height="14" viewBox="0 0 12 14"><path d="M3.8 3 L7.6 6.8 L3.8 10.6" stroke="#a0a0a0" stroke-width="1.9" fill="none"/></svg>
<span id="t58" class="a t" style="left:704.50px;top:755.00px;font-size:11px;line-height:13px;color:#000;font-weight:bold;transform:scaleX(1.0673);transform-origin:0 0;">Black &amp; White</span>
<svg class="a" style="left:685px;top:775px" width="12" height="14" viewBox="0 0 12 14"><path d="M3.8 3 L7.6 6.8 L3.8 10.6" stroke="#a0a0a0" stroke-width="1.9" fill="none"/></svg>
<span id="t59" class="a t" style="left:704.50px;top:776.00px;font-size:11px;line-height:13px;color:#000;font-weight:bold;transform:scaleX(1.0131);transform-origin:0 0;">Colors</span>
<svg class="a" style="left:685px;top:796px" width="12" height="14" viewBox="0 0 12 14"><path d="M3.8 3 L7.6 6.8 L3.8 10.6" stroke="#a0a0a0" stroke-width="1.9" fill="none"/></svg>
<span id="t60" class="a t" style="left:704.50px;top:797.00px;font-size:11px;line-height:13px;color:#000;font-weight:bold;transform:scaleX(1.0513);transform-origin:0 0;">Contours</span>
<svg class="a" style="left:685px;top:817px" width="12" height="14" viewBox="0 0 12 14"><path d="M3.8 3 L7.6 6.8 L3.8 10.6" stroke="#a0a0a0" stroke-width="1.9" fill="none"/></svg>
<span id="t61" class="a t" style="left:704.50px;top:818.00px;font-size:11px;line-height:13px;color:#000;font-weight:bold;transform:scaleX(1.0916);transform-origin:0 0;">Deformations</span>
<svg class="a" style="left:685px;top:838px" width="12" height="14" viewBox="0 0 12 14"><path d="M3.8 3 L7.6 6.8 L3.8 10.6" stroke="#a0a0a0" stroke-width="1.9" fill="none"/></svg>
<span id="t62" class="a t" style="left:704.50px;top:839.00px;font-size:11px;line-height:13px;color:#000;font-weight:bold;transform:scaleX(1.0840);transform-origin:0 0;">Degradations</span>
<svg class="a" style="left:685px;top:859px" width="12" height="14" viewBox="0 0 12 14"><path d="M3.8 3 L7.6 6.8 L3.8 10.6" stroke="#a0a0a0" stroke-width="1.9" fill="none"/></svg>
<span id="t63" class="a t" style="left:704.50px;top:860.00px;font-size:11px;line-height:13px;color:#000;font-weight:bold;transform:scaleX(1.0948);transform-origin:0 0;">Details</span>
<div class="a" style="left:690px;top:884px;width:21px;height:20px;background:#e1e1e1;border:1px solid #adadad;box-sizing:border-box;"></div>
<div class="a" style="left:719px;top:884px;width:21px;height:20px;background:#cccccc;border:1px solid #bfbfbf;box-sizing:border-box;"></div>
<div class="a" style="left:748px;top:884px;width:21px;height:20px;background:#cccccc;border:1px solid #bfbfbf;box-sizing:border-box;"></div>
<div class="a" style="left:922px;top:884px;width:21px;height:20px;background:#cccccc;border:1px solid #bfbfbf;box-sizing:border-box;"></div>
<div class="a" style="left:951px;top:884px;width:21px;height:20px;background:#e1e1e1;border:1px solid #adadad;box-sizing:border-box;"></div>
<div class="a" style="left:980px;top:884px;width:21px;height:20px;background:#e1e1e1;border:1px solid #adadad;box-sizing:border-box;"></div>
<div class="a" style="left:690px;top:912px;width:21px;height:20px;background:#e1e1e1;border:1px solid #adadad;box-sizing:border-box;"></div>
<svg class="a" style="left:690px;top:884px" width="21" height="21" viewBox="0 0 21 21">
<path d="M4 3.5 H12.5 V16.5 L8.2 12.6 L4 16.5 Z" fill="#0a7d1e" stroke="#066014" stroke-width="0.6"/>
<path d="M10.5 9.2 H16.5 M13.5 6.2 V12.2" stroke="#fff" stroke-width="3.4"/>
<path d="M11 9.2 H16 M13.5 6.7 V11.7" stroke="#109428" stroke-width="2"/>
</svg>
<svg class="a" style="left:719px;top:884px" width="21" height="21" viewBox="0 0 21 21">
<path d="M4 3.5 H12.5 V16.5 L8.2 12.6 L4 16.5 Z" fill="#8e8e8e" stroke="#7c7c7c" stroke-width="0.6"/>
<path d="M10.5 9.2 H16.5" stroke="#e8e8e8" stroke-width="3.4"/>
<path d="M11 9.2 H16" stroke="#a0a0a0" stroke-width="1.8"/>
</svg>
<svg class="a" style="left:748px;top:884px" width="21" height="21" viewBox="0 0 21 21">
<rect x="3" y="3" width="14.5" height="6.2" fill="#fbfbfb"/><rect x="3" y="11" width="14.5" height="6.2" fill="#fbfbfb"/>
<text x="10.3" y="8.4" font-family="Liberation Sans, sans-serif" font-weight="bold" font-size="6.3" text-anchor="middle" fill="#6e6e6e" textLength="11.5" lengthAdjust="spacingAndGlyphs">Abc</text>
<text x="10.3" y="16.6" font-family="Liberation Sans, sans-serif" font-weight="bold" font-size="6.3" text-anchor="middle" fill="#6e6e6e" textLength="11.5" lengthAdjust="spacingAndGlyphs">Def</text>
</svg>
<svg class="a" style="left:922px;top:884px" width="21" height="21" viewBox="0 0 21 21">
<circle cx="10.5" cy="10.5" r="7.2" fill="#b4b4b4"/>
<path d="M10.5 10.5 L10.5 3.3 A7.2 7.2 0 0 1 16.5 6.5 Z" fill="#c4c4c4"/>
<path d="M10.5 10.5 L4.2 7 A7.2 7.2 0 0 1 10.5 3.3 Z" fill="#a4a4a4"/>
<path d="M10.5 10.5 L6 16.1 A7.2 7.2 0 0 1 4.2 7 Z" fill="#bcbcbc"/>
<path d="M10.5 10.5 L15 16.1 A7.2 7.2 0 0 1 6 16.1 Z" fill="#a8a8a8"/>
</svg>
<svg class="a" style="left:951px;top:884px" width="21" height="21" viewBox="0 0 21 21">
<path d="M2.2 4.5 H10 M2.2 15.5 H10" stroke="#109010" stroke-width="1.1"/>
<path d="M2.2 10 H10" stroke="#58b058" stroke-width="1.6"/>
<rect x="12.7" y="2.6" width="4.6" height="4.2" rx="0.8" fill="#e8f4e8" stroke="#1f9a1f" stroke-width="1.3"/>
<rect x="12.7" y="13.6" width="4.6" height="4.2" rx="0.8" fill="#e8f4e8" stroke="#1f9a1f" stroke-width="1.3"/>
<path d="M12.6 9 L14.9 11.2 L17.4 8.6" stroke="#1f9a1f" stroke-width="1.1" fill="none"/>
</svg>
<svg class="a" style="left:980px;top:884px" width="21" height="21" viewBox="0 0 21 21">
<defs><radialGradient id="gdn" cx="0.6" cy="0.4" r="0.6"><stop offset="0" stop-color="#18c818"/><stop offset="1" stop-color="#0a6c0a"/></radialGradient></defs>
<path d="M3.6 4 H17.2 L15.2 7.8 H17 L10.4 16.8 L3.8 7.8 H5.6 Z" fill="url(#gdn)" stroke="#0a6e0a" stroke-width="0.5"/>
<path d="M4.6 4.6 L6.6 8.4 L5 8.4 L7 11" stroke="#7ad87a" stroke-width="0.7" fill="none" opacity="0.7"/>
</svg>
<svg class="a" style="left:690px;top:912px" width="21" height="21" viewBox="0 0 21 21">
<path d="M3.2 9.7 C3.2 7.4 4.4 5.6 6.2 5.1 C7.8 4.6 9.6 4.4 11.2 4.4 L11.2 2.1 L15.8 6 L11.2 9.9 L11.2 7.7 C9.6 7.7 8 7.7 6.9 8 C6.4 8.3 6.3 9 6.3 9.7 Z" fill="#66dc62" stroke="#2a7a3a" stroke-width="0.85" stroke-linejoin="round"/>
<path d="M5.2 6.9 C6.8 6.2 9.5 6 12.6 6" stroke="#dcffd8" stroke-width="1.5" fill="none" stroke-linecap="round"/>
<path d="M16.8 10.2 C16.8 12.6 15.8 14.8 13.9 15.4 C12.3 15.8 10.2 15.8 8.4 15.8 L8.4 17.8 L4 13.9 L8.4 10.1 L8.4 12.4 C10 12.4 11.9 12.4 13.1 12.1 C13.9 11.8 14.1 11 14.1 10.3 Z" fill="#66dc62" stroke="#2a7a3a" stroke-width="0.85" stroke-linejoin="round"/>
<path d="M7.2 14.0 C9.8 14.1 13 14.2 15.2 12.6" stroke="#dcffd8" stroke-width="1.5" fill="none" stroke-linecap="round"/>
</svg>
<div class="a" style="left:718px;top:915px;width:13px;height:13px;background:#fff;border:1px solid #333;box-sizing:border-box;"></div>
<span id="t64" class="a t" style="left:735.00px;top:916.00px;font-size:11px;line-height:13px;color:#000;letter-spacing:0.411px;">Internet</span>
<span id="t65" class="a t" style="left:1026.00px;top:54.00px;font-size:11px;line-height:13px;color:#000;font-weight:bold;transform:scaleX(1.0694);transform-origin:0 0;">Extract Objects</span>
<div class="a" style="left:1621px;top:50px;width:21px;height:20px;background:#e1e1e1;border:1px solid #adadad;box-sizing:border-box;"></div>
<div class="a" style="left:1650px;top:50px;width:21px;height:20px;background:#e1e1e1;border:1px solid #adadad;box-sizing:border-box;"></div>
<svg class="a" style="left:1621px;top:50px" width="21" height="21" viewBox="0 0 21 21" shape-rendering="crispEdges">
<defs><linearGradient id="cpg" x1="0" y1="0" x2="1" y2="1"><stop offset="0" stop-color="#ffffff"/><stop offset="1" stop-color="#cfe2fa"/></linearGradient></defs>
<rect x="4.5" y="3.5" width="13" height="13" fill="url(#cpg)" stroke="#6f9bcd" stroke-width="1"/>
<rect x="2.5" y="7.5" width="9" height="9" fill="url(#cpg)" stroke="#5d8cc2" stroke-width="1"/>
</svg>
<svg class="a" style="left:1650px;top:50px" width="21" height="21" viewBox="0 0 21 21">
<path d="M3.2 9.7 C3.2 7.4 4.4 5.6 6.2 5.1 C7.8 4.6 9.6 4.4 11.2 4.4 L11.2 2.1 L15.8 6 L11.2 9.9 L11.2 7.7 C9.6 7.7 8 7.7 6.9 8 C6.4 8.3 6.3 9 6.3 9.7 Z" fill="#66dc62" stroke="#2a7a3a" stroke-width="0.85" stroke-linejoin="round"/>
<path d="M5.2 6.9 C6.8 6.2 9.5 6 12.6 6" stroke="#dcffd8" stroke-width="1.5" fill="none" stroke-linecap="round"/>
<path d="M16.8 10.2 C16.8 12.6 15.8 14.8 13.9 15.4 C12.3 15.8 10.2 15.8 8.4 15.8 L8.4 17.8 L4 13.9 L8.4 10.1 L8.4 12.4 C10 12.4 11.9 12.4 13.1 12.1 C13.9 11.8 14.1 11 14.1 10.3 Z" fill="#66dc62" stroke="#2a7a3a" stroke-width="0.85" stroke-linejoin="round"/>
<path d="M7.2 14.0 C9.8 14.1 13 14.2 15.2 12.6" stroke="#dcffd8" stroke-width="1.5" fill="none" stroke-linecap="round"/>
</svg>
<span id="t66" class="a t" style="left:1043.00px;top:99.00px;font-size:11px;line-height:13px;color:#000;letter-spacing:-0.095px;">Background Point (%)</span>
<div class="a" style="left:1159px;top:99px;width:18px;height:13px;background:#fff;border:1px solid #000;box-sizing:border-box;"></div>
<span id="t67" class="a t" style="left:1182.80px;top:100.00px;font-size:11px;line-height:13px;color:#000;transform:scaleX(0.86);transform-origin:0 0;">X</span>
<div class="a" style="left:1195px;top:95px;width:59px;height:20px;background:#fff;border:1px solid #7a7a7a;box-sizing:border-box;"></div>
<span id="t68" class="a t" style="left:1197.50px;top:100.00px;font-size:11px;line-height:13px;color:#000;letter-spacing:0.295px;">7,31</span>
<div class="a" style="left:1238px;top:97px;width:14px;height:9px;background:#f0f0f0;border:1px solid #c8c8c8;box-sizing:border-box;"></div>
<div class="a" style="left:1238px;top:105px;width:14px;height:8px;background:#f0f0f0;border:1px solid #c8c8c8;box-sizing:border-box;"></div>
<svg class="a" style="left:1238px;top:97px" width="14" height="16" viewBox="0 0 14 16"><path d="M4.2 6 L7 2.8 L9.8 6 Z" fill="#111"/><path d="M4.2 10.2 L7 13.4 L9.8 10.2 Z" fill="#111"/></svg>
<span id="t69" class="a t" style="left:1259.80px;top:100.00px;font-size:11px;line-height:13px;color:#000;transform:scaleX(0.86);transform-origin:0 0;">Y</span>
<div class="a" style="left:1272px;top:95px;width:59px;height:20px;background:#fff;border:1px solid #7a7a7a;box-sizing:border-box;"></div>
<span id="t70" class="a t" style="left:1274.50px;top:100.00px;font-size:11px;line-height:13px;color:#000;letter-spacing:-0.386px;">17,74</span>
<div class="a" style="left:1315px;top:97px;width:14px;height:9px;background:#f0f0f0;border:1px solid #c8c8c8;box-sizing:border-box;"></div>
<div class="a" style="left:1315px;top:105px;width:14px;height:8px;background:#f0f0f0;border:1px solid #c8c8c8;box-sizing:border-box;"></div>
<svg class="a" style="left:1315px;top:97px" width="14" height="16" viewBox="0 0 14 16"><path d="M4.2 6 L7 2.8 L9.8 6 Z" fill="#111"/><path d="M4.2 10.2 L7 13.4 L9.8 10.2 Z" fill="#111"/></svg>
<div class="a" style="left:1044px;top:121px;width:610px;height:1px;background:#a0a0a0;"></div>
<div class="a" style="left:1044px;top:122px;width:610px;height:1px;background:#fff;"></div>
<span id="t71" class="a t" style="left:1043.00px;top:135.00px;font-size:11px;line-height:13px;color:#000;letter-spacing:-0.250px;">Color Tolerance</span>
<div class="a" style="left:1159px;top:138.5px;width:434px;height:3px;background:#e7eaea;border:1px solid #d6d6d6;box-sizing:border-box;"></div>
<div class="a" style="left:1192px;top:130px;width:10px;height:21px;background:#0078d7;"></div>
<div class="a" style="left:1599px;top:131px;width:55px;height:20px;background:#fff;border:1px solid #7a7a7a;box-sizing:border-box;"></div>
<span id="t72" class="a t" style="left:1601.50px;top:136.00px;font-size:11px;line-height:13px;color:#000;letter-spacing:0.425px;">20</span>
<div class="a" style="left:1638px;top:133px;width:14px;height:9px;background:#f0f0f0;border:1px solid #c8c8c8;box-sizing:border-box;"></div>
<div class="a" style="left:1638px;top:141px;width:14px;height:8px;background:#f0f0f0;border:1px solid #c8c8c8;box-sizing:border-box;"></div>
<svg class="a" style="left:1638px;top:133px" width="14" height="16" viewBox="0 0 14 16"><path d="M4.2 6 L7 2.8 L9.8 6 Z" fill="#111"/><path d="M4.2 10.2 L7 13.4 L9.8 10.2 Z" fill="#111"/></svg>
<span id="t73" class="a t" style="left:1043.00px;top:163.00px;font-size:11px;line-height:13px;color:#000;letter-spacing:-0.006px;">Opacity Threshold (%)</span>
<div class="a" style="left:1159px;top:166.5px;width:434px;height:3px;background:#e7eaea;border:1px solid #d6d6d6;box-sizing:border-box;"></div>
<div class="a" style="left:1371px;top:158px;width:10px;height:21px;background:#0078d7;"></div>
<div class="a" style="left:1599px;top:159px;width:55px;height:20px;background:#fff;border:1px solid #7a7a7a;box-sizing:border-box;"></div>
<span id="t74" class="a t" style="left:1601.50px;top:164.00px;font-size:11px;line-height:13px;color:#000;letter-spacing:0.425px;">50</span>
<div class="a" style="left:1638px;top:161px;width:14px;height:9px;background:#f0f0f0;border:1px solid #c8c8c8;box-sizing:border-box;"></div>
<div class="a" style="left:1638px;top:169px;width:14px;height:8px;background:#f0f0f0;border:1px solid #c8c8c8;box-sizing:border-box;"></div>
<svg class="a" style="left:1638px;top:161px" width="14" height="16" viewBox="0 0 14 16"><path d="M4.2 6 L7 2.8 L9.8 6 Z" fill="#111"/><path d="M4.2 10.2 L7 13.4 L9.8 10.2 Z" fill="#111"/></svg>
<span id="t75" class="a t" style="left:1043.00px;top:191.00px;font-size:11px;line-height:13px;color:#000;letter-spacing:-0.248px;">Minimal Area</span>
<div class="a" style="left:1159px;top:194.5px;width:434px;height:3px;background:#e7eaea;border:1px solid #d6d6d6;box-sizing:border-box;"></div>
<div class="a" style="left:1184px;top:186px;width:10px;height:21px;background:#0078d7;"></div>
<div class="a" style="left:1599px;top:187px;width:55px;height:20px;background:#fff;border:1px solid #7a7a7a;box-sizing:border-box;"></div>
<span id="t76" class="a t" style="left:1601.50px;top:192.00px;font-size:11px;line-height:13px;color:#000;letter-spacing:-0.066px;">0.3</span>
<div class="a" style="left:1638px;top:189px;width:14px;height:9px;background:#f0f0f0;border:1px solid #c8c8c8;box-sizing:border-box;"></div>
<div class="a" style="left:1638px;top:197px;width:14px;height:8px;background:#f0f0f0;border:1px solid #c8c8c8;box-sizing:border-box;"></div>
<svg class="a" style="left:1638px;top:189px" width="14" height="16" viewBox="0 0 14 16"><path d="M4.2 6 L7 2.8 L9.8 6 Z" fill="#111"/><path d="M4.2 10.2 L7 13.4 L9.8 10.2 Z" fill="#111"/></svg>
<span id="t77" class="a t" style="left:1043.00px;top:218.00px;font-size:11px;line-height:13px;color:#000;letter-spacing:-0.068px;">Connectivity</span>
<div class="a" style="left:1159px;top:214px;width:495px;height:20px;background:#e1e1e1;border:1px solid #adadad;box-sizing:border-box;"></div>
<span id="t78" class="a t" style="left:1162.30px;top:219.00px;font-size:11px;line-height:13px;color:#000;letter-spacing:-0.462px;">Low</span>
<svg class="a" style="left:1639px;top:218px" width="12" height="12" viewBox="0 0 12 12"><path d="M2 4.2 L6 8.2 L10 4.2" stroke="#404040" stroke-width="1.15" fill="none"/></svg>
<span id="t79" class="a t" style="left:1043.00px;top:244.00px;font-size:11px;line-height:13px;color:#000;letter-spacing:0.143px;">Output As</span>
<div class="a" style="left:1159px;top:240px;width:495px;height:20px;background:#e1e1e1;border:1px solid #adadad;box-sizing:border-box;"></div>
<span id="t80" class="a t" style="left:1162.30px;top:245.00px;font-size:11px;line-height:13px;color:#000;letter-spacing:-0.261px;">Crop</span>
<svg class="a" style="left:1639px;top:244px" width="12" height="12" viewBox="0 0 12 12"><path d="M2 4.2 L6 8.2 L10 4.2" stroke="#404040" stroke-width="1.15" fill="none"/></svg>
<div class="a" style="left:1044px;top:266px;width:610px;height:1px;background:#a0a0a0;"></div>
<div class="a" style="left:1044px;top:267px;width:610px;height:1px;background:#fff;"></div>
<span id="t81" class="a t" style="left:1043.00px;top:276.00px;font-size:11px;line-height:13px;color:#000;letter-spacing:-0.282px;">Preview Guides</span>
<div class="a" style="left:1159px;top:275px;width:13px;height:13px;background:#fff;border:1px solid #333;box-sizing:border-box;"></div>
<svg class="a" style="left:1159px;top:275px" width="13" height="13" viewBox="0 0 13 13"><path d="M2.8 6.6 L5.3 9.2 L10.3 3.4" stroke="#222" stroke-width="1.3" fill="none"/></svg>
<div class="a" style="left:1044px;top:294px;width:610px;height:1px;background:#a0a0a0;"></div>
<div class="a" style="left:1044px;top:295px;width:610px;height:1px;background:#fff;"></div>
<span id="t82" class="a t" style="left:1044.50px;top:303.00px;font-size:10px;line-height:12px;color:#000;letter-spacing:-0.379px;">Author:</span>
<span id="t83" class="a t" style="left:1078.00px;top:303.00px;font-size:10px;line-height:12px;color:#0000ff;font-style:italic;letter-spacing:-0.273px;text-decoration:underline;">David Tschumperlé</span>
<span id="t84" class="a t" style="left:1158.50px;top:303.00px;font-size:10px;line-height:12px;color:#000;">.</span>
<span id="t85" class="a t" style="left:1179.00px;top:303.00px;font-size:10px;line-height:12px;color:#000;letter-spacing:-0.389px;">Latest Update:</span>
<span id="t86" class="a t" style="left:1243.00px;top:303.00px;font-size:10px;line-height:12px;color:#000;font-style:italic;letter-spacing:-0.475px;">2015/23/02.</span>
<span id="t87" class="a t" style="left:1299.00px;top:321.00px;font-size:11px;line-height:13px;color:#0000ff;letter-spacing:-0.075px;text-decoration:underline;">Filter explained here</span>
<div class="a" style="left:1026px;top:827px;width:646px;height:1px;background:#a0a0a0;"></div>
<div class="a" style="left:1026px;top:828px;width:646px;height:1px;background:#fff;"></div>
<span id="t88" class="a t" style="left:1026.00px;top:842.00px;font-size:11px;line-height:13px;color:#000;font-weight:bold;transform:scaleX(1.1526);transform-origin:0 0;">Invoer / Uitvoer</span>
<div class="a" style="left:1650px;top:837px;width:21px;height:20px;background:#e1e1e1;border:1px solid #adadad;box-sizing:border-box;"></div>
<svg class="a" style="left:1650px;top:837px" width="21" height="21" viewBox="0 0 21 21">
<path d="M3.2 9.7 C3.2 7.4 4.4 5.6 6.2 5.1 C7.8 4.6 9.6 4.4 11.2 4.4 L11.2 2.1 L15.8 6 L11.2 9.9 L11.2 7.7 C9.6 7.7 8 7.7 6.9 8 C6.4 8.3 6.3 9 6.3 9.7 Z" fill="#66dc62" stroke="#2a7a3a" stroke-width="0.85" stroke-linejoin="round"/>
<path d="M5.2 6.9 C6.8 6.2 9.5 6 12.6 6" stroke="#dcffd8" stroke-width="1.5" fill="none" stroke-linecap="round"/>
<path d="M16.8 10.2 C16.8 12.6 15.8 14.8 13.9 15.4 C12.3 15.8 10.2 15.8 8.4 15.8 L8.4 17.8 L4 13.9 L8.4 10.1 L8.4 12.4 C10 12.4 11.9 12.4 13.1 12.1 C13.9 11.8 14.1 11 14.1 10.3 Z" fill="#66dc62" stroke="#2a7a3a" stroke-width="0.85" stroke-linejoin="round"/>
<path d="M7.2 14.0 C9.8 14.1 13 14.2 15.2 12.6" stroke="#dcffd8" stroke-width="1.5" fill="none" stroke-linecap="round"/>
</svg>
<span id="t89" class="a t" style="left:1034.50px;top:877.00px;font-size:11px;line-height:13px;color:#000;letter-spacing:0.088px;">Invoer lagen</span>
<div class="a" style="left:1111px;top:873px;width:535px;height:20px;background:#e1e1e1;border:1px solid #adadad;box-sizing:border-box;"></div>
<span id="t90" class="a t" style="left:1114.30px;top:878.00px;font-size:11px;line-height:13px;color:#000;letter-spacing:0.082px;">Actief (standaard)</span>
<svg class="a" style="left:1631px;top:877px" width="12" height="12" viewBox="0 0 12 12"><path d="M2 4.2 L6 8.2 L10 4.2" stroke="#404040" stroke-width="1.15" fill="none"/></svg>
<span id="t91" class="a t" style="left:1034.50px;top:903.00px;font-size:11px;line-height:13px;color:#000;letter-spacing:-0.110px;">Uitvoer-modus</span>
<div class="a" style="left:1111px;top:899px;width:535px;height:20px;background:#e1e1e1;border:1px solid #adadad;box-sizing:border-box;"></div>
<span id="t92" class="a t" style="left:1114.30px;top:904.00px;font-size:11px;line-height:13px;color:#000;letter-spacing:0.045px;">In plaats van (standaard)</span>
<svg class="a" style="left:1631px;top:903px" width="12" height="12" viewBox="0 0 12 12"><path d="M2 4.2 L6 8.2 L10 4.2" stroke="#404040" stroke-width="1.15" fill="none"/></svg>
<div class="a" style="left:1655px;top:864px;width:1px;height:69px;background:#fafafa;"></div>
<div class="a" style="left:1656px;top:881px;width:15px;height:34px;background:#cdcdcd;"></div>
<svg class="a" style="left:1657.5px;top:867px" width="12" height="12" viewBox="1657.5 867 12 12"><path d="M1660.2 875.5 L1663.5 871.5 L1666.8 875.5" stroke="#505050" stroke-width="2.2" fill="none"/></svg>
<svg class="a" style="left:1657.5px;top:919px" width="12" height="12" viewBox="1657.5 919 12 12"><path d="M1660.2 922.5 L1663.5 926.5 L1666.8 922.5" stroke="#505050" stroke-width="2.2" fill="none"/></svg>
<div class="a" style="left:1258px;top:949px;width:95px;height:22px;background:#e1e1e1;border:1px solid #adadad;box-sizing:border-box;"></div>
<div class="a" style="left:1361px;top:949px;width:73px;height:22px;background:#e1e1e1;border:1px solid #adadad;box-sizing:border-box;"></div>
<div class="a" style="left:1442px;top:949px;width:73px;height:22px;background:#cccccc;border:1px solid #bfbfbf;box-sizing:border-box;"></div>
<div class="a" style="left:1523px;top:949px;width:76px;height:22px;background:#e1e1e1;border:1px solid #adadad;box-sizing:border-box;"></div>
<div class="a" style="left:1607px;top:949px;width:73px;height:22px;background:#e1e1e1;border:1px solid #adadad;box-sizing:border-box;"></div>
<span id="t93" class="a t" style="left:1278.50px;top:955.00px;font-size:11px;line-height:13px;color:#000;letter-spacing:-0.282px;"><u>S</u>chermvullend</span>
<span id="t94" class="a t" style="left:1391.50px;top:955.00px;font-size:11px;line-height:13px;color:#000;letter-spacing:-0.408px;"><u>C</u>lose</span>
<span id="t95" class="a t" style="left:1464.50px;top:955.00px;font-size:11px;line-height:13px;color:#838383;letter-spacing:-0.181px;"><u>A</u>nnuleer</span>
<span id="t96" class="a t" style="left:1543.50px;top:955.00px;font-size:11px;line-height:13px;color:#000;letter-spacing:-0.124px;"><u>T</u>oepassen</span>
<span id="t97" class="a t" style="left:1643.50px;top:955.00px;font-size:11px;line-height:13px;color:#000;letter-spacing:-0.903px;"><u>O</u>K</span>
<svg class="a" style="left:1260px;top:951px" width="18" height="18" viewBox="0 0 18 18">
<rect x="1.5" y="3" width="14.5" height="12.5" rx="1" fill="#fff" stroke="#3a6fd0" stroke-width="1.4"/>
<path d="M3.5 7 V5 H5.5 M12 5 H14 V7 M14 11.5 V13.5 H12 M5.5 13.5 H3.5 V11.5" stroke="#e0683a" stroke-width="1.1" fill="none"/>
</svg>
<svg class="a" style="left:1373px;top:952px" width="17" height="17" viewBox="0 0 17 17">
<path d="M4.4 4 L13 12.6 M13 4 L4.4 12.6" stroke="#f2b4b4" stroke-width="5.4" stroke-linecap="square"/>
<path d="M4.4 4 L13 12.6 M13 4 L4.4 12.6" stroke="#d41616" stroke-width="3.3" stroke-linecap="square"/>
<path d="M4.2 3.6 L8 7.4" stroke="#f06060" stroke-width="1.2" stroke-linecap="round" opacity="0.7"/>
</svg>
<svg class="a" style="left:1448px;top:953px" width="16" height="16" viewBox="0 0 16 16">
<defs><radialGradient id="ang" cx="0.4" cy="0.35" r="0.7"><stop offset="0" stop-color="#a8a8a8"/><stop offset="1" stop-color="#8c8c8c"/></radialGradient></defs><circle cx="7.6" cy="7.4" r="5.5" fill="url(#ang)" stroke="#f6f6f6" stroke-width="1.3"/>
</svg>
<svg class="a" style="left:1526px;top:951px" width="18" height="18" viewBox="0 0 18 18">
<g transform="rotate(-15 9 9.5)"><rect x="3.3" y="4" width="11" height="11" fill="#f4f4f4" stroke="#c4c4c4" stroke-width="0.8"/>
<rect x="8.8" y="4" width="5.5" height="5.5" fill="#e02a2a"/><rect x="3.3" y="9.5" width="5.5" height="5.5" fill="#e02a2a"/></g>
</svg>
<svg class="a" style="left:1626.5px;top:952px" width="16" height="18" viewBox="0 0 16 18">
<defs><linearGradient id="okg" x1="0" y1="0" x2="0" y2="1"><stop offset="0" stop-color="#4a4638"/><stop offset="0.7" stop-color="#a88838"/><stop offset="1" stop-color="#f0d080"/></linearGradient></defs>
<rect x="1.2" y="1.8" width="12.6" height="8.6" rx="0.8" fill="#d0d0d0" stroke="#b8b8b8" stroke-width="0.6"/>
<rect x="3" y="3" width="9.2" height="6.2" fill="url(#okg)"/>
<path d="M4.8 11.6 H10.4 L7.6 14.6 Z" fill="#f0a050"/>
</svg>
</body></html>
